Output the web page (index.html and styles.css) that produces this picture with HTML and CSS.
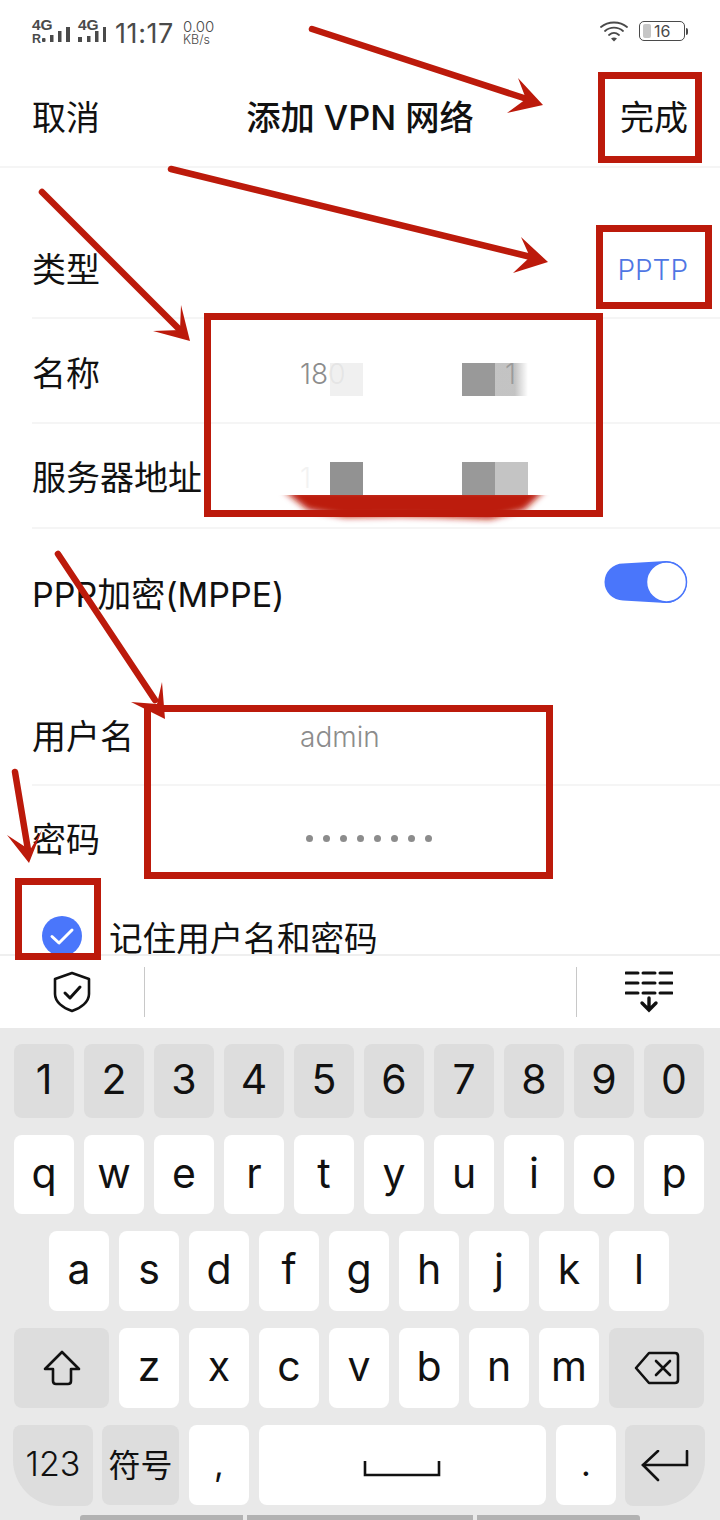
FILE: index.html
```
<!DOCTYPE html>
<html lang="zh">
<head>
<meta charset="utf-8">
<title>添加 VPN 网络</title>
<link rel="stylesheet" href="styles.css">
</head>
<body>
<div class="screen">
  <div class="status">
    <div class="status-left">
      <div class="sig sig-a"><span class="sig-txt">4G</span><span class="sig-r">R</span><svg class="bars" width="28" height="15" viewBox="0 0 28 15"><rect x="0" y="11" width="3.500" height="4" rx="1"/><rect x="8" y="8" width="3.500" height="7"/><rect x="16" y="4" width="3.500" height="11"/><rect x="24" y="0" width="4" height="15"/></svg></div>
      <div class="sig sig-b"><span class="sig-txt">4G</span><svg class="bars" width="28" height="15" viewBox="0 0 28 15"><rect x="0" y="10" width="4" height="5"/><rect x="9" y="9" width="3.500" height="6"/><rect x="17" y="4" width="3.500" height="11"/><rect x="25" y="0" width="3" height="15"/></svg></div>
      <span class="time">11:17</span>
      <span class="speed"><span class="speed-v">0.00</span><span class="speed-u">KB/s</span></span>
    </div>
    <div class="status-right">
      <svg width="28" height="22" viewBox="0 0 28 22" fill="none" stroke="#4a4a4a" stroke-width="1.800" stroke-linecap="round"><path d="M1 7C8 1 20 1 27 7"/><path d="M5 11C10 6.500 18 6.500 23 11"/><path d="M9 15C12 12.500 16 12.500 19 15"/><path d="M11 18.500L14 21.500L17 18.500Q14 16.500 11 18.500Z" fill="#4a4a4a" stroke="none"/></svg>
      <div class="battery"><span class="batt-fill"></span><span class="batt-num">16</span></div><span class="batt-tip"></span>
    </div>
  </div>

  <header class="nav">
    <span class="nav-btn">取消</span>
    <span class="nav-title">添加 VPN 网络</span>
    <span class="nav-btn">完成</span>
  </header>

  <main class="form">
    <div class="row row-type"><span class="label">类型</span><span class="type-val">PPTP</span></div>
    <div class="row row-name"><span class="label">名称</span><span class="val">180</span><span class="val val-end">1</span></div>
    <div class="row row-server"><span class="label">服务器地址</span><span class="val val-faint">1</span></div>
    <div class="row row-ppp"><span class="label">PPP加密(MPPE)</span>
      <svg class="switch" width="84" height="44" viewBox="0 0 84 44"><path d="M19 3.500L62 1A21 21 0 0 1 62 43L19 40.500A18.500 18.500 0 0 1 19 3.500Z" fill="#4a76fb"/><circle cx="62.500" cy="22" r="20" fill="#fff" stroke="#4a76fb" stroke-width="1.500"/></svg>
    </div>
    <div class="row row-user"><span class="label">用户名</span><span class="val">admin</span></div>
    <div class="row row-pass"><span class="label">密码</span><span class="dots"><i></i><i></i><i></i><i></i><i></i><i></i><i></i><i></i></span></div>
    <div class="remember">
      <svg class="check" width="40" height="40" viewBox="0 0 40 40"><circle cx="20" cy="20" r="20" fill="#4a76fb"/><path d="M10 20.500L17 27L30 14" fill="none" stroke="#fff" stroke-width="3" stroke-linecap="round" stroke-linejoin="round"/></svg>
      <span class="label">记住用户名和密码</span>
    </div>
  </main>

  <div class="toolbar">
    <div class="tool tool-l">
      <svg width="38" height="42" viewBox="0 0 38 42" fill="none" stroke="#111" stroke-width="2.600" stroke-linejoin="round" stroke-linecap="round"><path d="M19 2L36 8V23C36 31 28 37 19 40C10 37 2 31 2 23V8Z"/><path d="M12 22L17 27L27 16" stroke-width="3"/></svg>
    </div>
    <div class="tool-mid"></div>
    <div class="tool tool-r">
      <svg width="48" height="44" viewBox="0 0 48 44" fill="none" stroke="#111" stroke-width="3" stroke-linecap="round"><path d="M1 3H13M18 3H30M35 3H47M1 13H13M18 13H30M35 13H47M1 23H13M18 23H30M35 23H47"/><path d="M24 28V39M17 33L24 40L31 33" stroke-linejoin="miter" stroke-width="3.400"/></svg>
    </div>
  </div>

  <div class="keyboard">
    <div class="krow krow-num">
      <span class="key fn">1</span><span class="key fn">2</span><span class="key fn">3</span><span class="key fn">4</span><span class="key fn">5</span><span class="key fn">6</span><span class="key fn">7</span><span class="key fn">8</span><span class="key fn">9</span><span class="key fn">0</span>
    </div>
    <div class="krow krow-q">
      <span class="key">q</span><span class="key">w</span><span class="key">e</span><span class="key">r</span><span class="key">t</span><span class="key">y</span><span class="key">u</span><span class="key">i</span><span class="key">o</span><span class="key">p</span>
    </div>
    <div class="krow krow-a">
      <span class="key">a</span><span class="key">s</span><span class="key">d</span><span class="key">f</span><span class="key">g</span><span class="key">h</span><span class="key">j</span><span class="key">k</span><span class="key">l</span>
    </div>
    <div class="krow">
      <span class="key fn wide"><svg width="38" height="36" viewBox="0 0 38 36" fill="none" stroke="#111" stroke-width="2.600" stroke-linejoin="round"><path d="M19 2L36 19H28V31Q28 34 25 34H13Q10 34 10 31V19H2Z"/></svg></span>
      <span class="key">z</span><span class="key">x</span><span class="key">c</span><span class="key">v</span><span class="key">b</span><span class="key">n</span><span class="key">m</span>
      <span class="key fn wide"><svg width="46" height="34" viewBox="0 0 46 34" fill="none" stroke="#111" stroke-width="2.600" stroke-linejoin="round" stroke-linecap="round"><path d="M15 2H41Q44 2 44 5V29Q44 32 41 32H15L2 17Z"/><path d="M22 10L36 24M36 10L22 24"/></svg></span>
    </div>
    <div class="krow krow-bottom">
      <span class="key fn k123">123</span>
      <span class="key fn ksym">符号</span>
      <span class="key kpunct">,</span>
      <span class="key kspace"><svg width="78" height="16" viewBox="0 0 78 16" fill="none" stroke="#111" stroke-width="2.600"><path d="M2 0V14H76V0"/></svg></span>
      <span class="key kpunct">.</span>
      <span class="key fn kenter"><svg width="48" height="32" viewBox="0 0 48 32" fill="none" stroke="#111" stroke-width="2.600" stroke-linecap="round"><path d="M46 1V15H2"/><path d="M17 1L2 15L17 30"/></svg></span>
    </div>
    <div class="homebar"><span class="hb hb1"></span><span class="hb hb2"></span><span class="hb hb3"></span></div>
  </div>

  <div class="mask mask-a"></div>
  <div class="mask mask-b"></div>
  <div class="mask mask-c"></div>
  <div class="mask mask-d"></div>
  <div class="mask mask-e"></div>
  <div class="mask mask-f"></div>

  <svg class="notes" width="720" height="1520" viewBox="0 0 720 1520">
    <defs>
      <filter id="smear" x="-20%" y="-60%" width="140%" height="220%"><feGaussianBlur stdDeviation="3"/></filter>
      <clipPath id="smearclip"><rect x="260" y="495" width="310" height="40"/></clipPath>
    </defs>
    <g clip-path="url(#smearclip)"><path d="M283 490H545L524 510L490 519L440 517L400 516L345 517L308 510Z" fill="#bc1a0b" filter="url(#smear)"/></g>
    <g fill="none" stroke="#bc1a0b" stroke-width="7">
      <rect x="601.500" y="75.500" width="97" height="84"/>
      <rect x="599.500" y="228.500" width="109" height="77"/>
      <rect x="207.500" y="316.500" width="392" height="197"/>
      <rect x="147.500" y="708.500" width="402" height="167"/>
      <rect x="18.500" y="881.500" width="79" height="75"/>
    </g>
    <g fill="none" stroke="#bc1a0b" stroke-width="6.500" stroke-linecap="round">
      <path d="M312 29L530 100"/>
      <path d="M171 169L535 258"/>
      <path d="M42 192L180 330"/>
      <path d="M58 554L155 700"/>
      <path d="M15 772L28 850"/>
    </g>
    <g fill="#bc1a0b">
      <path d="M543 105L518 78L526 99L507 113Z"/>
      <path d="M548 262L521 237L530 257L513 273Z"/>
      <path d="M190 341L181 305L180 330L153 331Z"/>
      <path d="M165 719L162 682L157 704L131 702Z"/>
      <path d="M29 863L42 830L30 850L7 835Z"/>
    </g>
  </svg>
</div>
</body>
</html>
```
FILE: styles.css
```
* { box-sizing: border-box; }
html, body { margin: 0; padding: 0; background: #fff; }
body { font-family: Inter, "Noto Sans CJK SC", sans-serif; color: #111; }
.screen { position: relative; width: 720px; height: 1520px; overflow: hidden; background: #fff; display: flex; flex-direction: column; }

.status { height: 68px; padding: 14px 32px 0 32px; display: flex; justify-content: space-between; align-items: flex-start; color: #4a4a4a; flex: none; }
.status-left { display: flex; align-items: flex-start; height: 32px; }
.sig { position: relative; height: 28px; flex: none; }
.sig-a { width: 38px; }
.sig-b { width: 28px; margin-left: 8px; }
.sig-txt { font: 700 15.500px/12px "Liberation Sans", sans-serif; position: absolute; left: 0; top: 5px; color: #4a4a4a; }
.sig-r { font: 700 12.500px/10px "Liberation Sans", sans-serif; position: absolute; left: 0; top: 20px; color: #4a4a4a; }
.bars { fill: #4a4a4a; position: absolute; right: 0; bottom: 0; }
.time { font-size: 27px; line-height: 32px; margin-left: 9px; margin-top: 4px; color: #4a4a4a; letter-spacing: 0.6px; }
.speed { display: flex; flex-direction: column; margin-left: 9px; padding-top: 7px; }
.speed-v { font-size: 15px; line-height: 12px; font-weight: 300; }
.speed-u { font-size: 12.500px; line-height: 10px; margin-top: 2px; font-weight: 300; }
.status-right { display: flex; align-items: center; padding-top: 6px; }
.battery { position: relative; width: 46px; height: 20px; border: 1px solid #4a4a4a; border-radius: 5px; margin-left: 11px; display: flex; align-items: center; padding-left: 3px; }
.batt-fill { width: 8px; height: 14px; background: #c6c6c6; border-radius: 2px; }
.batt-num { font-size: 16px; margin-left: 3px; color: #4a4a4a; }
.batt-tip { width: 2px; height: 7px; background: #4a4a4a; border-radius: 0 2px 2px 0; margin-left: 1px; }

.nav { height: 100px; flex: none; padding: 2px 32px 0 32px; display: flex; justify-content: space-between; align-items: center; border-bottom: 2px solid #f5f5f5; }
.nav-btn { font-size: 34px; line-height: 40px; }
.nav-title { font-size: 34.300px; line-height: 40px; font-weight: 500; }

.form { flex: 1; min-height: 0; padding-left: 32px; display: flex; flex-direction: column; }
.row { position: relative; display: flex; align-items: center; padding-right: 32px; flex: none; }
.label { font-size: 34px; line-height: 40px; font-weight: 400; }
.val { position: absolute; left: 268px; color: #8c8c8c; font-size: 28px; line-height: 36px; font-weight: 300; }
.val-end { left: 473px; color: #777; }
.val-faint { color: #f2f2f2; }
.row-type { height: 151px; padding-top: 54px; border-bottom: 2px solid #f5f5f5; justify-content: space-between; }
.type-val { color: #4f76e4; font-size: 28px; line-height: 36px; font-weight: 300; }
.row-name { height: 105px; padding-top: 7px; border-bottom: 2px solid #f5f5f5; }
.row-server { height: 105px; padding-top: 5px; border-bottom: 2px solid #f5f5f5; }
.row-ppp { height: 134px; align-items: flex-start; padding-top: 46px; justify-content: space-between; }
.switch { margin-top: -15px; flex: none; }
.row-user { height: 123px; padding-top: 27px; border-bottom: 2px solid #f5f5f5; }
.row-pass { height: 104px; padding-top: 3px; }
.dots { position: absolute; left: 274px; display: flex; gap: 10px; margin-top: -3px; }
.dots i { width: 7px; height: 7px; border-radius: 50%; background: #8c8c8c; }
.remember { position: relative; flex: none; display: flex; align-items: center; margin-left: 10px; height: 38px; margin-top: 26px; }
.check { flex: none; margin-bottom: -2px; align-self: flex-start; }
.remember .label { margin-left: 27px; margin-top: 7px; line-height: 34px; font-size: 33.600px; }

.toolbar { height: 74px; flex: none; display: flex; align-items: center; background: #fff; border-top: 2px solid #efefef; position: relative; }
.tool { display: flex; align-items: center; justify-content: center; height: 100%; }
.tool-l { width: 144px; }
.tool-mid { flex: 1; height: 50px; border-left: 1px solid #c8c8c8; border-right: 1px solid #c8c8c8; }
.tool-r { width: 143px; }

.keyboard { height: 492px; flex: none; background: #e9e9e9; padding: 16px 0 0 14px; display: flex; flex-direction: column; position: relative; }
.krow { display: flex; gap: 10px; height: 80px; margin-bottom: 17px; flex: none; }
.krow-num { height: 74px; }
.krow-q { height: 79px; }
.krow-a { padding-left: 35px; }
.key { width: 60px; background: #fff; border-radius: 8px; display: flex; align-items: center; justify-content: center; font-size: 41px; color: #111; font-weight: 400; padding-bottom: 4px; }
.fn { background: #dddddd; }
.wide { width: 95px; padding-bottom: 0; }
.krow-bottom { margin-left: -1px; margin-bottom: 0; gap: 0; }
.k123 { width: 80px; height: 81px; margin-right: 9px; border-radius: 8px 8px 8px 46px; font-size: 34px; font-weight: 300; }
.ksym { width: 77px; margin-right: 10px; font-size: 32px; }
.kpunct { margin-right: 10px; font-size: 34px; }
.kspace { width: 287px; margin-right: 10px; padding-bottom: 0; }
.kspace svg { margin-left: -2px; margin-top: 8px; }
.kenter { width: 80px; height: 81px; margin-left: -1px; border-radius: 8px 8px 46px 8px; padding-bottom: 0; }
.homebar { position: absolute; left: 80px; bottom: 0; display: flex; gap: 4px; height: 5px; }
.hb { background: #b2b2b2; height: 5px; }
.hb1 { width: 163px; border-radius: 3px 0 0 0; }
.hb2 { width: 226px; }
.hb3 { width: 163px; border-radius: 0 3px 0 0; }

.mask { position: absolute; width: 33px; height: 33px; }
.mask-a { left: 330px; top: 363px; background: rgba(238, 238, 238, 0.9); }
.mask-b { left: 462px; top: 363px; background: #999; }
.mask-c { left: 495px; top: 363px; width: 33px; background: linear-gradient(90deg, rgba(170, 170, 170, 0.7) 60%, rgba(255, 255, 255, 0) 100%); }
.mask-d { left: 330px; top: 462px; background: #929292; }
.mask-e { left: 462px; top: 462px; background: #999; }
.mask-f { left: 495px; top: 462px; background: #c4c4c4; }
.notes { position: absolute; left: 0; top: 0; pointer-events: none; }
```
